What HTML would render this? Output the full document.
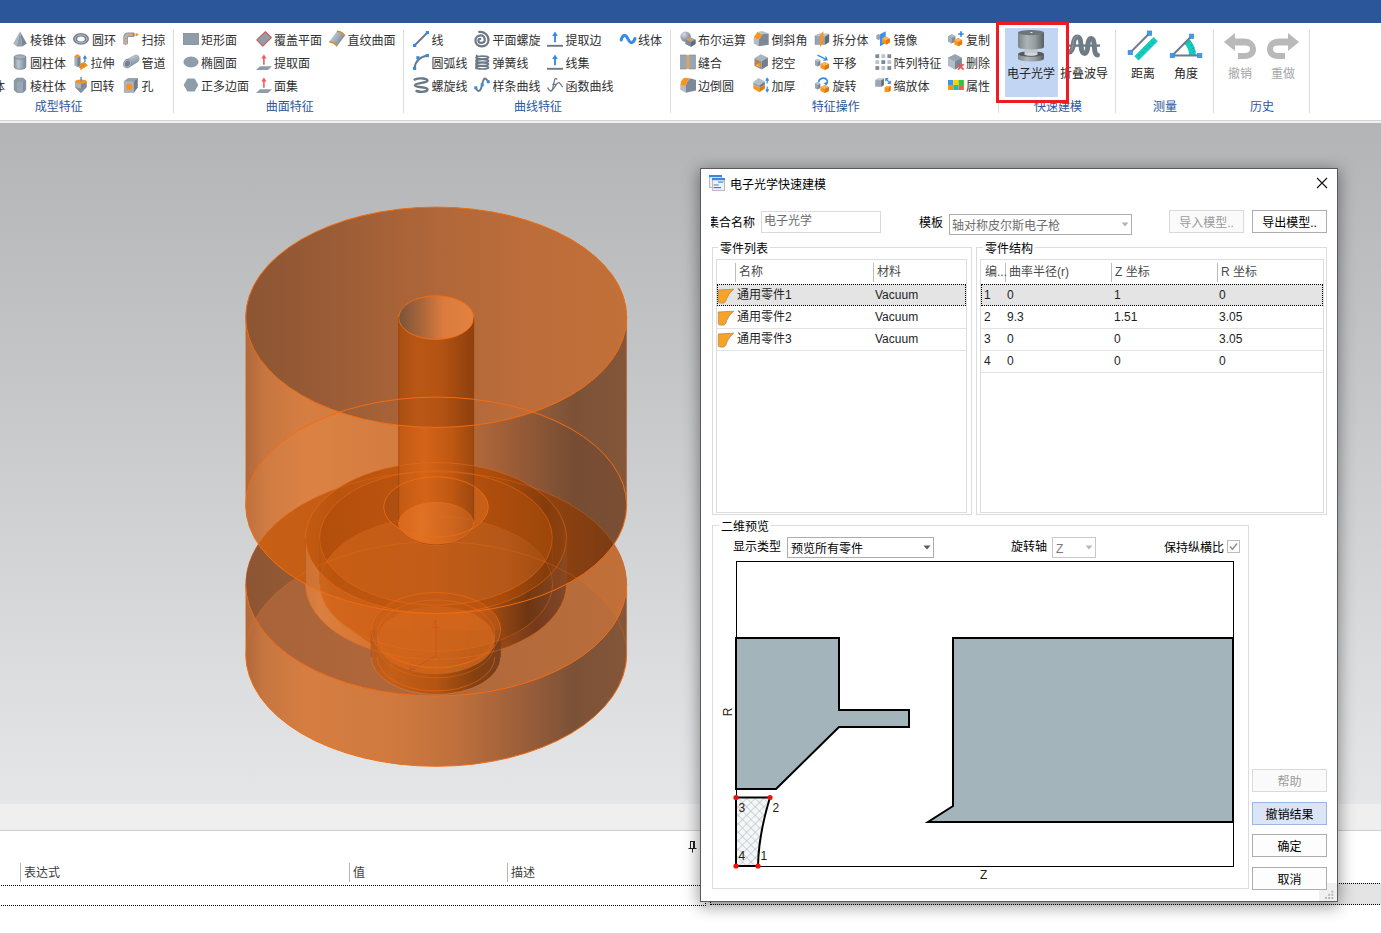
<!DOCTYPE html>
<html lang="zh-CN">
<head>
<meta charset="utf-8">
<title>电子光学快速建模</title>
<style>
*{box-sizing:border-box;margin:0;padding:0}
html,body{width:1381px;height:933px;overflow:hidden;background:#fff}
body{position:relative;font-family:"Liberation Sans","Noto Sans CJK SC",sans-serif;font-size:12px;color:#000;line-height:16px}
.abs{position:absolute}
#titlebar{left:0;top:0;width:1381px;height:23px;background:#2b579a}
#ribbon{left:0;top:23px;width:1381px;height:97px;background:#fff}
#rline1{left:0;top:120px;width:1381px;height:1px;background:#d5d5d5}
#rline2{left:0;top:121px;width:1381px;height:2px;background:#f1f1f1}
#viewport{left:0;top:123px;width:1381px;height:681px;background:linear-gradient(#b3b4b6 0%,#c6c7c9 40%,#d9dadb 75%,#e5e6e7 100%)}
#band{left:0;top:804px;width:1381px;height:26px;background:#efefef}
#bandline{left:0;top:830px;width:1381px;height:1px;background:#cfcfcf}
#bottom{left:0;top:831px;width:1381px;height:102px;background:#fff}
.ri{position:absolute;height:16px;line-height:16px;white-space:nowrap;color:#303030}
.ri svg{position:absolute;left:0;top:0;width:16px;height:16px;overflow:visible}
.ri span{position:absolute;top:0}
.glabel{position:absolute;top:99px;height:16px;line-height:16px;color:#2b579a;white-space:nowrap;transform:translateX(-50%)}
.vsep{position:absolute;top:30px;width:1px;height:83px;background:#dcdcdc}
.big{position:absolute;text-align:center;white-space:nowrap;color:#262626;transform:translateX(-50%);top:66px;height:16px;line-height:16px}
/* dialog */
#dlg{left:700px;top:168px;width:638px;height:734px;background:#fff;border:1px solid #5a5a5a;box-shadow:0 3px 15px 1px rgba(0,0,0,.42)}
.t{position:absolute;white-space:nowrap;height:16px;line-height:16px;margin-top:1px}
.grp{position:absolute;border:1px solid #dcdcdc}
.list{position:absolute;border:1px solid #dcdcdc;background:#fff}
.btn{position:absolute;width:75px;height:23px;border:1px solid #adadad;background:#fdfdfd;text-align:center;line-height:22px;padding-top:1px;white-space:nowrap}
.t.r{margin-top:0;color:#1e1e1e}
.btn.dis{border-color:#d9d9d9;background:#fafafa;color:#9a9a9a}
.btn.hot{border-color:#9cb6e2;background:#dbe5f6}
.combo{position:absolute;height:21px;border:1px solid #adadad;background:#fff}
.hsep{position:absolute;width:1px;background:#bdbdbd}
.rowline{position:absolute;height:1px;background:#e3e3e3}
.sel{position:absolute;background:#e4e4e4;outline:1px dotted #000;outline-offset:-1px}
</style>
</head>
<body>
<div id="titlebar" class="abs"></div>
<div id="ribbon" class="abs">
<div class="abs" style="left:0;top:-23px;width:0;height:0">
<svg width="0" height="0" style="position:absolute"><defs><linearGradient id="gcyl" x1="0" x2="1"><stop offset="0" stop-color="#7c8998"/><stop offset=".35" stop-color="#cdd5dd"/><stop offset="1" stop-color="#7c8998"/></linearGradient><linearGradient id="gcyl2" x1="0" x2="1"><stop offset="0" stop-color="#8492a2"/><stop offset=".35" stop-color="#bcc6cf"/><stop offset="1" stop-color="#7a8898"/></linearGradient><linearGradient id="gpipe" x1="0" y1="0" x2=".5" y2="1"><stop offset="0" stop-color="#d0d7de"/><stop offset=".5" stop-color="#a9b4c0"/><stop offset="1" stop-color="#7a8898"/></linearGradient><linearGradient id="gruled" x1="0" y1="0" x2="1" y2=".6"><stop offset="0" stop-color="#d3dae0"/><stop offset=".55" stop-color="#a5b0bc"/><stop offset="1" stop-color="#6f7c8b"/></linearGradient><radialGradient id="gsph" cx=".35" cy=".3" r=".75"><stop offset="0" stop-color="#d5dce3"/><stop offset="1" stop-color="#6f7b89"/></radialGradient><linearGradient id="gbig" x1="0" x2="1"><stop offset="0" stop-color="#7c8589"/><stop offset=".35" stop-color="#adb5b8"/><stop offset=".65" stop-color="#959da1"/><stop offset="1" stop-color="#585f63"/></linearGradient></defs></svg>
<div class="ri" style="left:-7px;top:77px"><span style="left:0;top:2px">体</span></div>
<div class="ri" style="left:13px;top:31px"><svg viewBox="0 0 16 16"><g transform="translate(-1 0)"><path d="M8 0.6 L1.2 12.6 L4.6 15.4 Z" fill="#aab5c0"/><path d="M8 0.6 L4.6 15.4 L10.4 15.4 Z" fill="#8f9cab"/><path d="M8 0.6 L10.4 15.4 L14.8 12.6 Z" fill="#7a8898"/></g></svg><span style="left:17px;top:2px">棱锥体</span></div>
<div class="ri" style="left:13px;top:54px"><svg viewBox="0 0 16 16"><g transform="translate(-1 0)"><path d="M2.2 3 V13 A5.8 2.3 0 0 0 13.8 13 V3 Z" fill="url(#gcyl2)" stroke="#6f7d8c" stroke-width=".7"/><ellipse cx="8" cy="3" rx="5.8" ry="2.2" fill="#a3afbc" stroke="#6f7d8c" stroke-width=".7"/></g></svg><span style="left:17px;top:2px">圆柱体</span></div>
<div class="ri" style="left:13px;top:77px"><svg viewBox="0 0 16 16"><g transform="translate(-1 0)"><path d="M2.2 3.5 L5 1 H11 L13.8 3.5 V13 L11 15.5 H5 L2.2 13 Z" fill="#7f8d9d" stroke="#6f7d8c" stroke-width=".5"/><path d="M5 4.2 V15.5 H11 V4.2 Z" fill="#9aa7b5"/><path d="M2.2 3.5 L5 4.2 V15.5 L2.2 13 Z" fill="#8a98a8"/><path d="M2.2 3.5 L5 1 H11 L13.8 3.5 L11 4.4 H5 Z" fill="#8c99a8"/></g></svg><span style="left:17px;top:2px">棱柱体</span></div>
<div class="ri" style="left:73px;top:31px"><svg viewBox="0 0 16 16"><ellipse cx="8" cy="7.9" rx="8" ry="5.9" fill="#75818e"/><ellipse cx="8" cy="7.9" rx="5.9" ry="4.1" fill="none" stroke="#c3cbd3" stroke-width=".9"/><ellipse cx="8" cy="7.9" rx="3.8" ry="2.5" fill="#fff"/></svg><span style="left:19px;top:2px">圆环</span></div>
<div class="ri" style="left:73px;top:54px"><svg viewBox="0 0 16 16"><g transform="translate(1 0)"><path d="M3.8 11 L10.1 7.7 L13.9 11.4 L6.8 15.9 Z" fill="#f7941d"/><path d="M7 9.4 L10.4 13.6 M5.4 13.5 L12 9.6" stroke="#d9780c" stroke-width=".6"/><path d="M0.4 2.2 L3.4 0.2 L6.4 2.2 V11.4 L3.4 12.9 L0.4 11.4 Z" fill="#a3afbc"/><path d="M3.4 4 V12.9 L6.4 11.4 V2.2 Z" fill="#778595"/><path d="M0.4 2.2 L3.4 0.2 L6.4 2.2 L3.4 4 Z" fill="#f7941d"/><path d="M10.9 3 V8 M9.4 4.6 L10.9 2.2 L12.4 4.6" stroke="#368be4" stroke-width="1.3" fill="none"/></g></svg><span style="left:17.6px;top:2px">拉伸</span></div>
<div class="ri" style="left:73px;top:77px"><svg viewBox="0 0 16 16"><path d="M2.1 4.6 V10.1 L7.9 15.9 L13.8 10.1 V4.6 Z" fill="#7c8a99"/><path d="M2.1 4.6 V10.1 L7.9 15.9 V4.6 Z" fill="#a9b4c0"/><path d="M2.1 10.1 L7.9 15.9 L13.8 10.1 Q8 12.4 2.1 10.1Z" fill="#8492a1"/><ellipse cx="7.95" cy="4.5" rx="5.85" ry="2" fill="#f7941d"/><path d="M8.1 0 V4.6" stroke="#5f8fd0" stroke-width="1.5"/></svg><span style="left:17.6px;top:2px">回转</span></div>
<div class="ri" style="left:123px;top:31px"><svg viewBox="0 0 16 16"><path d="M2.6 13.2 V6.6 Q2.6 3.8 5.4 3.8 H10.6" fill="none" stroke="#8795a4" stroke-width="4.6"/><path d="M2.6 13.2 V6.6 Q2.6 3.8 5.4 3.8 H10.6" fill="none" stroke="#b4bec8" stroke-width="2.6"/><ellipse cx="10.6" cy="3.8" rx="1.2" ry="2.3" fill="#8795a4"/><path d="M2.6 14.2 V6.8 Q2.6 3.8 5.6 3.8 H12.6" fill="none" stroke="#f7941d" stroke-width="1.2" stroke-dasharray="1.8 1.1"/><path d="M12.8 1.8 L16 3.7 L12.8 5.6 Z" fill="#f7941d"/></svg><span style="left:18.5px;top:2px">扫掠</span></div>
<div class="ri" style="left:123px;top:54px"><svg viewBox="0 0 16 16"><path d="M2.6 5.6 L10.8 1.2 A3.4 4.2 25 0 1 14.2 8.6 L6.2 13.6 Z" fill="url(#gpipe)"/><ellipse cx="4.4" cy="9.6" rx="3.7" ry="4.5" transform="rotate(20 4.4 9.6)" fill="#b4bec8" stroke="#8492a1" stroke-width=".7"/><ellipse cx="4.4" cy="9.6" rx="2.5" ry="3.2" transform="rotate(20 4.4 9.6)" fill="#76838f"/></svg><span style="left:18.5px;top:2px">管道</span></div>
<div class="ri" style="left:123px;top:77px"><svg viewBox="0 0 16 16"><path d="M1.3 4.1 L5 1.1 H14.8 L11 4.1 Z" fill="#97a3b0"/><path d="M1.3 4.1 H11 V15.4 H1.3 Z" fill="#aab5c1" stroke="#7c8a99" stroke-width=".5"/><path d="M11 4.1 L14.8 1.1 V10.5 L11 15.4 Z" fill="#717e8d"/><rect x="3.2" y="6.8" width="6" height="6" rx="1.8" fill="#f7941d"/></svg><span style="left:18.5px;top:2px">孔</span></div>
<div class="ri" style="left:183px;top:31px"><svg viewBox="0 0 16 16"><rect x="0.5" y="2.5" width="15" height="11" fill="#8f9dab" stroke="#7c8998" stroke-width=".8"/></svg><span style="left:18px;top:2px">矩形面</span></div>
<div class="ri" style="left:183px;top:54px"><svg viewBox="0 0 16 16"><ellipse cx="8" cy="8" rx="7.6" ry="5.4" fill="#8f9dab"/></svg><span style="left:18px;top:2px">椭圆面</span></div>
<div class="ri" style="left:183px;top:77px"><svg viewBox="0 0 16 16"><path d="M0.6 8 L4.4 1.6 H11.6 L15.4 8 L11.6 14.6 H4.4 Z" fill="#8f9dab"/></svg><span style="left:18px;top:2px">正多边面</span></div>
<div class="ri" style="left:256px;top:31px"><svg viewBox="0 0 16 16"><path d="M0.8 8.9 L9.4 0.8 L15.4 6.6 L6.8 15.2 Z" fill="#8f9dab" stroke="#cf5c5c" stroke-width="1.2" stroke-linejoin="round"/></svg><span style="left:18px;top:2px">覆盖平面</span></div>
<div class="ri" style="left:256px;top:54px"><svg viewBox="0 0 16 16"><path d="M4 12.2 H16 L12 15.9 H0 Z" fill="#8f9dab"/><path d="M7.9 3.4 V10.8" stroke="#dc5656" stroke-width="1.5"/><path d="M5.3 4.4 L7.9 0.4 L10.5 4.4 Z" fill="#f05a5a"/></svg><span style="left:18px;top:2px">提取面</span></div>
<div class="ri" style="left:256px;top:77px"><svg viewBox="0 0 16 16"><path d="M4 12.2 H16 L12 15.9 H0 Z" fill="#8f9dab"/><path d="M7.9 3.4 V10.8" stroke="#dc5656" stroke-width="1.5"/><path d="M5.3 4.4 L7.9 0.4 L10.5 4.4 Z" fill="#f05a5a"/></svg><span style="left:18px;top:2px">面集</span></div>
<div class="ri" style="left:329px;top:31px"><svg viewBox="0 0 16 16"><path d="M0.2 10.8 L8 0.3 Q13.5 0.8 15.9 4.8 L8 15.3 Q5.5 11.4 0.2 10.8 Z" fill="url(#gruled)"/><path d="M8 0.3 Q13.5 0.8 15.9 4.8" fill="none" stroke="#d18a2c" stroke-width="1.4"/><path d="M0.2 10.8 Q5.5 11.4 8 15.3" fill="none" stroke="#d18a2c" stroke-width="1.4"/></svg><span style="left:18.5px;top:2px">直纹曲面</span></div>
<div class="ri" style="left:413px;top:31px"><svg viewBox="0 0 16 16"><path d="M1.5 14.5 L14.5 1.5" stroke="#6b7886" stroke-width="1.9"/><rect x="0" y="12.8" width="3.2" height="3.2" fill="#368be4"/><rect x="12.8" y="0" width="3.2" height="3.2" fill="#368be4"/></svg><span style="left:18.5px;top:2px">线</span></div>
<div class="ri" style="left:413px;top:54px"><svg viewBox="0 0 16 16"><path d="M1.5 14.5 Q2.5 3.5 14.5 1.5" stroke="#6b7886" stroke-width="1.9" fill="none"/><rect x="0" y="12.8" width="3.2" height="3.2" fill="#368be4"/><rect x="3.3" y="2.2" width="3.2" height="3.2" fill="#368be4"/><rect x="12.8" y="0" width="3.2" height="3.2" fill="#368be4"/></svg><span style="left:18.5px;top:2px">圆弧线</span></div>
<div class="ri" style="left:413px;top:77px"><svg viewBox="0 0 16 16"><path d="M1.6 2.6 C7 0.4 14.5 1.6 14.5 3.8 C14.5 6.2 2 5.6 2 8.2 C2 10.6 14.5 9.8 14.5 12.2 C14.5 14.8 8 15.6 3.5 14" stroke="#6b7886" stroke-width="2.4" fill="none" stroke-linecap="round"/></svg><span style="left:18.5px;top:2px">螺旋线</span></div>
<div class="ri" style="left:474px;top:31px"><svg viewBox="0 0 16 16"><path d="M5.2 0.9 C10.5 0.4 14.6 4.2 14.5 9.3 C14.4 13 11.6 15.3 7.8 15.3 C4 15.3 1.4 12.8 1.4 9.3 C1.4 6.4 3.8 4.4 7 4.4 C9.5 4.4 10.9 6.6 10.8 9.3 C10.7 11 9 11.9 7 11.9 C5.4 11.9 4.4 10.8 4.4 9.3 C4.4 8.2 5.2 7.6 6.3 7.8" stroke="#6b7886" stroke-width="2.2" fill="none" stroke-linecap="round"/></svg><span style="left:18.5px;top:2px">平面螺旋</span></div>
<div class="ri" style="left:474px;top:54px"><svg viewBox="0 0 16 16"><g fill="none" stroke="#6b7886" stroke-width="1.7"><ellipse cx="8.3" cy="3.6" rx="6.2" ry="1.5"/><ellipse cx="8.3" cy="6.9" rx="6.2" ry="1.5"/><ellipse cx="8.3" cy="10.2" rx="6.2" ry="1.5"/><ellipse cx="8.3" cy="13.5" rx="6.2" ry="1.5"/></g><path d="M2.8 0.8 L2.2 15.2" stroke="#6b7886" stroke-width="1.8"/></svg><span style="left:18.5px;top:2px">弹簧线</span></div>
<div class="ri" style="left:474px;top:77px"><svg viewBox="0 0 16 16"><path d="M1.8 10.8 C3.5 15.5 6.4 15 7.8 9 C9 3.5 10 0.8 11.5 1.6 C12.8 2.2 13.5 3.6 14.4 4.8" stroke="#6b7886" stroke-width="1.9" fill="none"/><rect x="0.3" y="9.3" width="3" height="3" fill="#368be4"/><rect x="6.7" y="6.3" width="3" height="3" fill="#368be4"/><rect x="12.8" y="3.3" width="3" height="3" fill="#368be4"/></svg><span style="left:18.5px;top:2px">样条曲线</span></div>
<div class="ri" style="left:547px;top:31px"><svg viewBox="0 0 16 16"><path d="M0 14.8 H16" stroke="#6b7886" stroke-width="1.9"/><path d="M8 3.4 V11.2" stroke="#368be4" stroke-width="1.9"/><path d="M5.2 5 L8 0.4 L10.8 5 Z" fill="#368be4"/></svg><span style="left:18.5px;top:2px">提取边</span></div>
<div class="ri" style="left:547px;top:54px"><svg viewBox="0 0 16 16"><path d="M0 14.8 H16" stroke="#6b7886" stroke-width="1.9"/><path d="M8 3.4 V11.2" stroke="#368be4" stroke-width="1.9"/><path d="M5.2 5 L8 0.4 L10.8 5 Z" fill="#368be4"/></svg><span style="left:18.5px;top:2px">线集</span></div>
<div class="ri" style="left:547px;top:77px"><svg viewBox="0 0 16 16"><path d="M10.2 2.4 C9.2 0.9 7.9 1.4 7.4 3.6 L5.6 12 C5.2 14 4 14.6 2.9 13.6 M5.4 7.3 H9.6" stroke="#6b7886" stroke-width="1.2" fill="none"/><path d="M0.6 10.4 C2 14 4.5 15 7 11 C9 7.5 10.5 5 12 5.6 C13.5 6.2 14.6 8.4 15.6 10.2" stroke="#6b7886" stroke-width="1.3" fill="none"/></svg><span style="left:18.5px;top:2px">函数曲线</span></div>
<div class="ri" style="left:620px;top:31px"><svg viewBox="0 0 16 16"><path d="M1.2 9 C2.5 4 5.5 2.5 8 8 C10.5 13.5 13.5 12 15 7.5" stroke="#368be4" stroke-width="3" fill="none" stroke-linecap="round"/></svg><span style="left:18px;top:2px">线体</span></div>
<div class="ri" style="left:680px;top:31px"><svg viewBox="0 0 16 16"><circle cx="5.6" cy="5.6" r="5.2" fill="url(#gsph)"/><path d="M5.5 8.5 L10 6 L15.5 8.5 V13 L11 15.8 L5.5 13 Z" fill="#98a5b3"/><path d="M5.5 8.5 L11 11 V15.8 L5.5 13 Z" fill="#7c8998"/><path d="M11 11 L15.5 8.5 V13 L11 15.8 Z" fill="#5f6b79"/><path d="M6 8.6 L10 6.2 L10.8 10.6 Z" fill="#f7941d"/></svg><span style="left:18px;top:2px">布尔运算</span></div>
<div class="ri" style="left:680px;top:54px"><svg viewBox="0 0 16 16"><rect x="0.5" y="1" width="6" height="14" fill="#98a5b3" stroke="#7c8998" stroke-width=".6"/><rect x="9.5" y="1" width="6" height="14" fill="#98a5b3" stroke="#7c8998" stroke-width=".6"/><rect x="6.5" y="1" width="3" height="14" fill="#d9a468"/></svg><span style="left:18px;top:2px">缝合</span></div>
<div class="ri" style="left:680px;top:77px"><svg viewBox="0 0 16 16"><path d="M0.3 8.3 L5.8 9 V15.7 L0.3 12.8 Z" fill="#b2bcc6"/><path d="M5.8 9 Q7 2.5 11 1.5 L16 3 V13.5 L5.8 15.7 Z" fill="#7c8998"/><path d="M0.3 8.4 Q0.8 1.8 5 0.8 L11 1.5 Q7 2.5 5.8 9.1 Z" fill="#f8951d"/></svg><span style="left:18px;top:2px">边倒圆</span></div>
<div class="ri" style="left:753px;top:31px"><svg viewBox="0 0 16 16"><path d="M4.4 1 L9.3 0 L15.7 2.5 L9.3 3.3 Z" fill="#b9c3cd"/><path d="M0.7 6.3 L5.5 8.9 V15.3 L0.7 12.6 Z" fill="#b2bcc6"/><path d="M5.5 8.9 L9.3 3.3 L15.7 2.5 V13.8 L5.5 15.3 Z" fill="#7c8998"/><path d="M0.7 6.3 L4.4 1 L9.3 3.3 L5.5 8.9 Z" fill="#f8951d"/></svg><span style="left:18.5px;top:2px">倒斜角</span></div>
<div class="ri" style="left:753px;top:54px"><svg viewBox="0 0 16 16"><path d="M1.4 4.3 L7.8 0.2 L14.9 3.5 L8.5 7.3 Z" fill="#a9b4c0"/><path d="M1.4 4.3 L8.5 7.3 V15.5 L1.4 11.8 Z" fill="#8995a3"/><path d="M8.5 7.3 L14.9 3.5 V11.8 L8.5 15.5 Z" fill="#717e8d"/><path d="M2.6 6.6 L7.3 8.8 V13.5 L2.6 11.3 Z" fill="#e8730c"/><path d="M2.6 11.3 L5 9.6 L7.3 13.5 Z" fill="#fbb040"/><path d="M5 9.6 L7.3 8.8 V13.5 Z" fill="#f7941d"/></svg><span style="left:18.5px;top:2px">挖空</span></div>
<div class="ri" style="left:753px;top:77px"><svg viewBox="0 0 16 16"><path d="M0.3 4.9 L5.5 1.1 L11.9 4.5 L6.3 8.2 Z" fill="#b4bec9"/><path d="M0.3 4.9 L6.3 8.2 V10.6 L0.3 8 Z" fill="#97a3b0"/><path d="M6.3 8.2 L11.9 4.5 V8 L6.3 10.6 Z" fill="#74808f"/><path d="M0.3 8 L6.3 10.6 V15.2 L0.3 11.6 Z" fill="#f8951d"/><path d="M6.3 10.6 L11.9 8 V11.6 L6.3 15.2 Z" fill="#e07a0c"/><path d="M14.2 2.2 V6.4 M12.8 3.6 L14.2 1.4 L15.6 3.6 M14.2 9.6 V13.8 M12.8 12.4 L14.2 14.6 L15.6 12.4" stroke="#368be4" stroke-width="1.2" fill="none"/></svg><span style="left:18.5px;top:2px">加厚</span></div>
<div class="ri" style="left:814px;top:31px"><svg viewBox="0 0 16 16"><path d="M1 5 L5 3 H15 V11 L11 13.5 H1 Z" fill="#98a5b3" stroke="#7c8998" stroke-width=".5"/><path d="M11 5.5 L15 3 V11 L11 13.5 Z" fill="#5f6b79"/><path d="M1 5 L5 3 H15 L11 5.5 Z" fill="#bcc5ce"/><path d="M6 3.5 L9.5 0.3 V12.5 L6 15.8 Z" fill="#f7941d" opacity=".92"/></svg><span style="left:18.5px;top:2px">拆分体</span></div>
<div class="ri" style="left:814px;top:54px"><svg viewBox="0 0 16 16"><path d="M1 6.6 L3.7 5 L6.4 6.6 V11 L3.7 12.6 L1 11 Z" fill="#7c8998"/><path d="M1 6.6 L3.7 5 L6.4 6.6 L3.7 8.2 Z" fill="#b9c3cd"/><path d="M1 6.6 L3.7 8.2 V12.6 L1 11 Z" fill="#98a5b3"/><path d="M6.5 10 L10.8 8 L15 10 V14 L10.8 16 L6.5 14 Z" fill="#f7941d"/><path d="M6.5 10 L10.8 8 L15 10 L10.8 12 Z" fill="#fbb45c"/><path d="M10.8 12 L15 10 V14 L10.8 16Z" fill="#d9780c"/><path d="M3.5 1.2 L12.5 5.6 M9.4 6.4 L13 5.8 L11.6 2.6" stroke="#368be4" stroke-width="1.3" fill="none"/></svg><span style="left:18.5px;top:2px">平移</span></div>
<div class="ri" style="left:814px;top:77px"><svg viewBox="0 0 16 16"><path d="M1 6.6 L3.7 5 L6.4 6.6 V11 L3.7 12.6 L1 11 Z" fill="#7c8998"/><path d="M1 6.6 L3.7 5 L6.4 6.6 L3.7 8.2 Z" fill="#b9c3cd"/><path d="M1 6.6 L3.7 8.2 V12.6 L1 11 Z" fill="#98a5b3"/><path d="M6.5 10 L10.8 8 L15 10 V14 L10.8 16 L6.5 14 Z" fill="#f7941d"/><path d="M6.5 10 L10.8 8 L15 10 L10.8 12 Z" fill="#fbb45c"/><path d="M10.8 12 L15 10 V14 L10.8 16Z" fill="#d9780c"/><path d="M5 5 A4.2 3.4 0 1 1 11.5 7.4" stroke="#368be4" stroke-width="1.7" fill="none"/><path d="M9.4 6 L13 8.6 L13.4 5 Z" fill="#368be4"/></svg><span style="left:18.5px;top:2px">旋转</span></div>
<div class="ri" style="left:876px;top:31px"><svg viewBox="0 0 16 16"><path d="M0.3 4.2 L2.6 3 L4.6 4.2 V8 L2.6 9 L0.3 8 Z" fill="#98a5b3"/><path d="M4 3.3 L9.7 0.3 V11.9 L4 15.3 Z" fill="#3d8fe8"/><path d="M6 7.6 L9.9 5.6 L13.8 7.6 V11.4 L9.9 13.4 L6 11.4 Z" fill="#f7941d"/><path d="M6 7.6 L9.9 5.6 L13.8 7.6 L9.9 9.5 Z" fill="#fbb45c"/><path d="M9.9 9.5 L13.8 7.6 V11.4 L9.9 13.4Z" fill="#e07a0c"/></svg><span style="left:17.5px;top:2px">镜像</span></div>
<div class="ri" style="left:876px;top:54px"><svg viewBox="0 0 16 16"><rect x="-0.6" y="0.3" width="3.8" height="3.8" fill="#7c8998"/><rect x="5.4" y="0.3" width="3.8" height="3.8" fill="#b9c3cd"/><rect x="11.4" y="0.3" width="3.8" height="3.8" fill="#7c8998"/><rect x="-0.6" y="6.2" width="3.8" height="3.8" fill="#b9c3cd"/><rect x="5.4" y="6.2" width="3.8" height="3.8" fill="#7c8998"/><rect x="11.4" y="6.2" width="3.8" height="3.8" fill="#b9c3cd"/><rect x="-0.6" y="12.1" width="3.8" height="3.8" fill="#7c8998"/><rect x="5.4" y="12.1" width="3.8" height="3.8" fill="#b9c3cd"/><rect x="11.4" y="12.1" width="3.8" height="3.8" fill="#7c8998"/></svg><span style="left:17.5px;top:2px">阵列特征</span></div>
<div class="ri" style="left:876px;top:77px"><svg viewBox="0 0 16 16"><path d="M-0.8 3.2 L1.6 1.5 H7.8 V8 L5.4 9.8 H-0.8 Z" fill="#98a5b3"/><path d="M5.4 3.2 L7.8 1.5 V8 L5.4 9.8Z" fill="#5f6b79"/><path d="M-0.8 3.2 L1.6 1.5 H7.8 L5.4 3.2Z" fill="#c3ccd5"/><path d="M8.6 10.4 L10.4 9 H14.6 V13.6 L12.8 15 H8.6 Z" fill="#f7941d"/><path d="M12.8 10.4 L14.6 9 V13.6 L12.8 15Z" fill="#d9780c"/><path d="M8.6 10.4 L10.4 9 H14.6 L12.8 10.4Z" fill="#fbb45c"/><path d="M9.8 1.6 L14.2 6.4 M9.8 4.2 V1.6 H12.4 M14.2 3.8 V6.4 H11.6" stroke="#368be4" stroke-width="1.2" fill="none"/></svg><span style="left:17.5px;top:2px">缩放体</span></div>
<div class="ri" style="left:948px;top:31px"><svg viewBox="0 0 16 16"><path d="M0.2 5.2 L3.8 3.3 L7.4 5.2 V10.6 L3.8 12.6 L0.2 10.6 Z" fill="#7c8998"/><path d="M0.2 5.2 L3.8 3.3 L7.4 5.2 L3.8 7.2 Z" fill="#aeb9c4"/><path d="M0.2 5.2 L3.8 7.2 V12.6 L0.2 10.6 Z" fill="#a3aebb"/><path d="M6.3 9 L10.2 7 L14.1 9 V13.2 L10.2 15.3 L6.3 13.2 Z" fill="#f7941d"/><path d="M6.3 9 L10.2 7 L14.1 9 L10.2 11 Z" fill="#fbb45c"/><path d="M10.2 11 L14.1 9 V13.2 L10.2 15.3Z" fill="#e8780a"/><path d="M13 0.2 V5.8 M10.2 3 H15.8" stroke="#368be4" stroke-width="1.7"/></svg><span style="left:18px;top:2px">复制</span></div>
<div class="ri" style="left:948px;top:54px"><svg viewBox="0 0 16 16"><path d="M7 0.3 L13.8 3.8 V11.5 L7 15.5 L0 11.5 V3.8 Z" fill="#a3aebb"/><path d="M7 0.3 L13.8 3.8 L7 7.4 L0 3.8 Z" fill="#97a3b0"/><path d="M7 7.4 L13.8 3.8 V11.5 L7 15.5 Z" fill="#7a8796"/><path d="M0 3.8 L7 7.4 V15.5 L0 11.5 Z" fill="#b2bcc7"/><path d="M10 10.2 L15.6 15.6 M15.6 10.2 L10 15.6" stroke="#f05050" stroke-width="1.7"/></svg><span style="left:18px;top:2px">删除</span></div>
<div class="ri" style="left:948px;top:77px"><svg viewBox="0 0 16 16"><rect x="0" y="3" width="5.3" height="5" fill="#3d95f0"/><rect x="5.3" y="3" width="5.3" height="5" fill="#fdd000"/><rect x="10.6" y="3" width="5.3" height="5" fill="#2ec840"/><rect x="0" y="8" width="5.3" height="5" fill="#ff9500"/><rect x="5.3" y="8" width="5.3" height="5" fill="#0bc5b5"/><rect x="10.6" y="8" width="5.3" height="5" fill="#ff5a5a"/></svg><span style="left:18px;top:2px">属性</span></div>
<div class="vsep" style="left:173px"></div>
<div class="vsep" style="left:403px"></div>
<div class="vsep" style="left:670px"></div>
<div class="vsep" style="left:998px"></div>
<div class="vsep" style="left:1115px"></div>
<div class="vsep" style="left:1213px"></div>
<div class="vsep" style="left:1309px"></div>
<div class="glabel" style="left:58.8px">成型特征</div>
<div class="glabel" style="left:289.8px">曲面特征</div>
<div class="glabel" style="left:538px">曲线特征</div>
<div class="glabel" style="left:835.8px">特征操作</div>
<div class="glabel" style="left:1058px">快速建模</div>
<div class="glabel" style="left:1165px">测量</div>
<div class="glabel" style="left:1262px">历史</div>
<div class="abs" style="left:1005px;top:28px;width:53px;height:69px;background:#c2d5f2"></div>
<svg class="abs" style="left:1015px;top:29px" width="32" height="34" viewBox="0 0 32 34">
<path d="M3 25 V29.8 A13 2.8 0 0 0 29 29.8 V25 Z" fill="url(#gbig)"/><ellipse cx="16" cy="25" rx="13" ry="2.8" fill="#555c60"/>
<path d="M9.5 20 V25.2 A6.5 1.6 0 0 0 22.5 25.2 V20 Z" fill="#c3c8cb"/><ellipse cx="16" cy="25.2" rx="6.5" ry="1.6" fill="#d3d7d9"/>
<path d="M3 3.6 V18 A13 2.6 0 0 0 29 18 V3.6 Z" fill="url(#gbig)"/><ellipse cx="16" cy="3.6" rx="13" ry="2.6" fill="#6d7579"/><ellipse cx="16.4" cy="3.5" rx="1.2" ry=".6" fill="#f2f2f2"/>
</svg>
<svg class="abs" style="left:1066px;top:32px" width="36" height="28" viewBox="1066 32 36 28">
<path d="M1069 45.6 H1100" stroke="#6e7b88" stroke-width="2.4" fill="none"/>
<path d="M1069.5 52 C1072.5 51.5 1073 48 1073.4 44 C1073.9 39 1075.4 37 1077.5 37 C1079.9 37 1080.8 40 1081 45 C1081.2 50 1082.2 53.6 1084.6 53.6 C1087 53.6 1087.6 50 1087.8 46 C1088 41 1089 38.4 1091.2 38.4 C1093.5 38.4 1094.2 42 1094.4 47 C1094.6 52 1095.4 55 1097.4 55" fill="none" stroke="#6e7b88" stroke-width="5" stroke-linecap="round"/>
<path d="M1070 51 C1072.5 50.5 1072.6 47 1073 43.5 C1073.5 39 1075 36.4 1077.3 36.4" fill="none" stroke="#8794a0" stroke-width="1.2" stroke-linecap="round"/>
</svg>
<svg class="abs" style="left:1127px;top:30px" width="32" height="32" viewBox="1127 30 32 32">
<path d="M1130.2 52.6 L1149.5 33.2" stroke="#6e7b8a" stroke-width="2"/>
<rect x="1128.1" y="50.4" width="4.3" height="4.3" fill="#3d9bf0" stroke="#2f7fd0" stroke-width=".6"/><rect x="1147.4" y="31" width="4.3" height="4.3" fill="#3d9bf0" stroke="#2f7fd0" stroke-width=".6"/>
<path d="M1153.6 37.1 L1157.8 41.3 L1138.6 60.5 L1134.3 56.3 Z" fill="#14cbbd"/><path d="M1138.3 54.6 l1.5 1.5 M1141.6 51.3 l2.2 2.2 M1144.9 48 l1.5 1.5 M1148.2 44.7 l2.2 2.2 M1151.5 41.4 l1.5 1.5" stroke="#0e9e92" stroke-width=".8"/>
</svg>
<svg class="abs" style="left:1169px;top:32px" width="34" height="28" viewBox="1169 32 34 28">
<path d="M1189.1 55.5 A16.8 16.8 0 0 0 1184.2 43.6 L1189 38.8 A23.6 23.6 0 0 1 1195.9 55.5 Z" fill="#14cbbd"/>
<path d="M1190.6 45.5 l2 -1 M1192.2 48.5 l2.2 -.8 M1193.3 51.6 l2.3 -.4 M1188.6 42.6 l1.8 -1.4" stroke="#0e9e92" stroke-width=".8"/>
<path d="M1172.3 55.5 L1191.5 36.2 M1172.3 55.5 H1199.7" stroke="#6e7b8a" stroke-width="2" fill="none"/>
<rect x="1170.2" y="53.4" width="4.3" height="4.3" fill="#3d9bf0" stroke="#2f7fd0" stroke-width=".6"/><rect x="1189.4" y="34.1" width="4.3" height="4.3" fill="#3d9bf0" stroke="#2f7fd0" stroke-width=".6"/><rect x="1197.6" y="53.4" width="4.3" height="4.3" fill="#3d9bf0" stroke="#2f7fd0" stroke-width=".6"/>
</svg>
<svg class="abs" style="left:1224px;top:33px" width="32" height="26" viewBox="0 0 32 26"><path d="M0 9 L11 0 V5.5 H20 C27 5.5 32 10 32 16.5 C32 22.5 27 26 21 26 H14 V20 H21 C24 20 26 18.6 26 16 C26 13.4 24 12.5 21 12.5 H11 V18 Z" fill="#b9b9b9"/></svg>
<svg class="abs" style="left:1267px;top:33px" width="32" height="26" viewBox="0 0 32 26"><path d="M0 9 L11 0 V5.5 H20 C27 5.5 32 10 32 16.5 C32 22.5 27 26 21 26 H14 V20 H21 C24 20 26 18.6 26 16 C26 13.4 24 12.5 21 12.5 H11 V18 Z" fill="#b9b9b9" transform="translate(32 0) scale(-1 1)"/></svg>
<div class="big" style="left:1031px;color:#262626">电子光学</div>
<div class="big" style="left:1084px;color:#262626">折叠波导</div>
<div class="big" style="left:1143px;color:#262626">距离</div>
<div class="big" style="left:1186px;color:#262626">角度</div>
<div class="big" style="left:1240px;color:#a6a6a6">撤销</div>
<div class="big" style="left:1283px;color:#a6a6a6">重做</div>
<div class="abs" style="left:996px;top:22px;width:73px;height:81px;border:3px solid #ed1c24"></div>
</div>
</div>
<div id="rline1" class="abs"></div><div id="rline2" class="abs"></div>
<div id="viewport" class="abs">
<svg class="abs" style="left:0;top:0" width="1381" height="681" viewBox="0 123 1381 681">
<defs>
<linearGradient id="mside" gradientUnits="userSpaceOnUse" x1="245.7" x2="626.7" y1="0" y2="0">
<stop offset="0" stop-color="#b0683b"/><stop offset=".05" stop-color="#c77640"/><stop offset=".16" stop-color="#d67e42"/><stop offset=".38" stop-color="#d07a3f"/><stop offset=".55" stop-color="#c0703c"/><stop offset=".72" stop-color="#9d5f3a"/><stop offset=".86" stop-color="#7c5237"/><stop offset="1" stop-color="#84563a"/></linearGradient>
<linearGradient id="mtop" gradientUnits="userSpaceOnUse" x1="245.7" x2="626.7" y1="0" y2="0">
<stop offset="0" stop-color="#8c5533"/><stop offset=".25" stop-color="#9c5d36"/><stop offset=".5" stop-color="#b06739"/><stop offset=".75" stop-color="#bd6d3a"/><stop offset="1" stop-color="#c27039"/></linearGradient>
<linearGradient id="mmid" gradientUnits="userSpaceOnUse" x1="245.7" x2="626.7" y1="0" y2="0">
<stop offset="0" stop-color="#a9633a"/><stop offset=".5" stop-color="#b1683a"/><stop offset="1" stop-color="#b96d3c"/></linearGradient>
<linearGradient id="mlens" gradientUnits="userSpaceOnUse" x1="245.7" x2="626.7" y1="0" y2="0">
<stop offset="0" stop-color="#c86016"/><stop offset=".3" stop-color="#c45b13"/><stop offset=".6" stop-color="#b8540f"/><stop offset=".8" stop-color="#8f420f"/><stop offset="1" stop-color="#783a14"/></linearGradient>
<linearGradient id="mrod" gradientUnits="userSpaceOnUse" x1="398" x2="474" y1="0" y2="0">
<stop offset="0" stop-color="#a84e12"/><stop offset=".25" stop-color="#b95716"/><stop offset=".55" stop-color="#b55314"/><stop offset=".85" stop-color="#9a460f"/><stop offset="1" stop-color="#8e400e"/></linearGradient>
<linearGradient id="mrod2" gradientUnits="userSpaceOnUse" x1="398" x2="474" y1="0" y2="0">
<stop offset="0" stop-color="#c25a14"/><stop offset=".35" stop-color="#d46418"/><stop offset=".7" stop-color="#c05812"/><stop offset="1" stop-color="#9c480f"/></linearGradient>
<linearGradient id="mhole" gradientUnits="userSpaceOnUse" x1="398" x2="474" y1="0" y2="0">
<stop offset="0" stop-color="#76533a"/><stop offset=".3" stop-color="#a8663a"/><stop offset=".6" stop-color="#db7c3e"/><stop offset="1" stop-color="#e3813f"/></linearGradient>
<linearGradient id="mring" gradientUnits="userSpaceOnUse" x1="305" x2="567" y1="0" y2="0">
<stop offset="0" stop-color="#c95e16"/><stop offset=".12" stop-color="#bd5610"/><stop offset=".45" stop-color="#c75c14"/><stop offset=".75" stop-color="#a84c0e"/><stop offset=".92" stop-color="#7e3a0e"/><stop offset="1" stop-color="#8a4312"/></linearGradient>
<linearGradient id="mbowl" gradientUnits="userSpaceOnUse" x1="305" x2="567" y1="0" y2="0">
<stop offset="0" stop-color="#d9742e"/><stop offset=".1" stop-color="#d2661c"/><stop offset=".4" stop-color="#cc6018"/><stop offset=".65" stop-color="#b85614"/><stop offset=".85" stop-color="#6e3512"/><stop offset="1" stop-color="#7a4a2c"/></linearGradient>
<linearGradient id="mfloor" gradientUnits="userSpaceOnUse" x1="320" x2="552" y1="0" y2="0">
<stop offset="0" stop-color="#cf6218"/><stop offset=".5" stop-color="#c7601c"/><stop offset=".8" stop-color="#b75a1c"/><stop offset="1" stop-color="#a04c12"/></linearGradient>
<linearGradient id="msmall" gradientUnits="userSpaceOnUse" x1="371" x2="501" y1="0" y2="0">
<stop offset="0" stop-color="#b85c20"/><stop offset=".15" stop-color="#c45e18"/><stop offset=".5" stop-color="#b45412"/><stop offset=".8" stop-color="#84400f"/><stop offset="1" stop-color="#76401e"/></linearGradient>
<linearGradient id="mcup" gradientUnits="userSpaceOnUse" x1="305" x2="567" y1="0" y2="0">
<stop offset="0" stop-color="#d27a3c"/><stop offset=".06" stop-color="#da8040"/><stop offset=".3" stop-color="#d4722c"/><stop offset=".6" stop-color="#bd5c18"/><stop offset=".88" stop-color="#74391a"/><stop offset="1" stop-color="#80492a"/></linearGradient>
<linearGradient id="mwall" gradientUnits="userSpaceOnUse" x1="320" x2="552" y1="0" y2="0">
<stop offset="0" stop-color="#b64f0d"/><stop offset=".3" stop-color="#bd5510"/><stop offset=".6" stop-color="#b9530f"/><stop offset="1" stop-color="#9c460d"/></linearGradient>
<linearGradient id="mnose" gradientUnits="userSpaceOnUse" x1="384" x2="488" y1="0" y2="0">
<stop offset="0" stop-color="#aa4e12"/><stop offset=".3" stop-color="#b8540f"/><stop offset=".7" stop-color="#c45c14"/><stop offset="1" stop-color="#c8601a"/></linearGradient>
<linearGradient id="mrodb" gradientUnits="userSpaceOnUse" x1="398" x2="474" y1="0" y2="0">
<stop offset="0" stop-color="#d8681c"/><stop offset=".3" stop-color="#e07224"/><stop offset=".7" stop-color="#cf661e"/><stop offset="1" stop-color="#b85a1a"/></linearGradient>
<linearGradient id="mu2" gradientUnits="userSpaceOnUse" x1="245.7" x2="626.7" y1="0" y2="0">
<stop offset="0" stop-color="#ff9a50" stop-opacity=".16"/><stop offset=".45" stop-color="#ff9a50" stop-opacity=".08"/><stop offset=".6" stop-color="#402010" stop-opacity=".04"/><stop offset="1" stop-color="#402010" stop-opacity=".14"/></linearGradient>
<clipPath id="cU2"><ellipse cx="436.2" cy="505.3" rx="190.5" ry="108.2"/></clipPath>
<clipPath id="cL1"><ellipse cx="436.2" cy="584.0" rx="190.5" ry="112.0"/></clipPath>
<clipPath id="cL2"><ellipse cx="436.2" cy="654.0" rx="190.5" ry="112.3"/></clipPath>
<clipPath id="cUsil"><path d="M245.7 317.25 A190.5 110.15 0 0 1 626.7 317.25 V505.3 A190.5 108.2 0 0 1 245.7 505.3 Z"/></clipPath>

</defs>
<path d="M245.7 584.0 A190.5 112.0 0 0 1 626.7 584.0 V654.0 A190.5 112.3 0 0 1 245.7 654.0 Z" fill="url(#mside)"/>
<g fill="url(#mtop)"><ellipse cx="436.2" cy="584.0" rx="190.5" ry="112.0"/></g>
<g clip-path="url(#cL1)"><g fill="url(#mmid)"><ellipse cx="436.2" cy="654.0" rx="190.5" ry="112.3"/></g></g>
<path d="M245.7 317.25 A190.5 110.15 0 0 1 626.7 317.25 V505.3 A190.5 108.2 0 0 1 245.7 505.3 Z" fill="url(#mside)"/>
<g fill="url(#mu2)"><ellipse cx="436.2" cy="505.3" rx="190.5" ry="108.2"/></g>
<g clip-path="url(#cL1)"><g fill="url(#mlens)"><ellipse cx="436.2" cy="505.3" rx="190.5" ry="108.2"/></g></g>
<g fill="url(#mtop)"><ellipse cx="436.2" cy="317.25" rx="190.5" ry="110.15"/></g>
<g id="inner">
<!-- cup outer silhouette -->
<path d="M305.5 538 A130.5 75.4 0 0 1 566.5 538 V584 A130.5 75.4 0 0 1 305.5 584 Z" fill="url(#mcup)"/>
<!-- cone + small hole silhouette -->
<path d="M319.9 550 V584 A116.3 67.2 0 0 0 346 626.5 L385.8 654 V657 A58.8 34 0 0 0 495 657 L486.2 654 L526 626.5 A116.3 67.2 0 0 0 552.5 584 V550 Z" fill="url(#mbowl)"/>
<path d="M371.2 630 V657 A64.8 37.5 0 0 0 500.8 657 V630 Z" fill="url(#msmall)"/>
<!-- rim + interior -->
<ellipse cx="436" cy="538" rx="130.5" ry="75.4" fill="url(#mring)"/>
<ellipse cx="436" cy="538" rx="116.3" ry="67.2" fill="url(#mwall)"/>
<clipPath id="cEi"><ellipse cx="436" cy="538" rx="116.3" ry="67.2"/></clipPath>
<g clip-path="url(#cEi)">
<ellipse cx="436" cy="584" rx="116.3" ry="67.2" fill="url(#mfloor)"/>
</g>
<!-- cone interior seen from above: between E_i@584 and hole@630 -->
<clipPath id="cEf"><ellipse cx="436" cy="584" rx="116.3" ry="67.2"/></clipPath>
<g clip-path="url(#cEf)"><ellipse cx="436" cy="630" rx="64.8" ry="37.5" fill="#c75e18" fill-opacity=".55"/></g>
<ellipse cx="436" cy="640" rx="58.8" ry="34" fill="#d4681e" fill-opacity=".75"/>
<path d="M436 620 V656 M432.5 627.5 H439.5 M436 620 L433.5 625" stroke="#c9541a" stroke-width="1" fill="none" stroke-opacity=".8"/><path d="M436 656 L410 670 M410 670 l1 -6 M410 670 l6 -1" stroke="#b5532c" stroke-width="1" fill="none" stroke-opacity=".75"/><path d="M436 656 L459 670 M459 670 l1 -6 M459 670 l-6 -1" stroke="#a8701a" stroke-width="1" fill="none" stroke-opacity=".75"/>
</g>
<!-- darkening of part seen through upper cylinder wall -->
<g clip-path="url(#cUsil)"><path d="M305.5 538 A130.5 75.4 0 0 1 566.5 538 V584 A130.5 75.4 0 0 1 305.5 584 Z" fill="#a84808" fill-opacity=".16"/></g>
<!-- nose hole in bottom face around bore -->
<ellipse cx="436" cy="507" rx="52.3" ry="30.2" fill="url(#mnose)"/>
<!-- bore -->
<path d="M398.7 317.6 V522 A37.5 21.7 0 0 0 473.7 522 V317.6 A37.5 21.7 0 0 1 398.7 317.6 Z" fill="url(#mrod2)"/>
<clipPath id="cU1"><ellipse cx="436.2" cy="317.25" rx="190.5" ry="110.15"/></clipPath>
<g clip-path="url(#cU1)"><path d="M398.7 317.6 V440 H473.7 V317.6 A37.5 21.7 0 0 1 398.7 317.6 Z" fill="url(#mrod)"/></g>
<clipPath id="cHole"><path d="M383 507 A52.3 30.2 0 0 1 489 507 V560 H383 Z"/></clipPath>
<g clip-path="url(#cHole)"><path d="M398.7 470 V522 A37.5 21.7 0 0 0 473.7 522 V470 Z" fill="url(#mrod2)"/>
<ellipse cx="436" cy="524" rx="37.5" ry="21.7" fill="url(#mrodb)"/></g>
<path d="M399.5 528 A37.5 21.7 0 0 0 472.9 528 L473.7 522 A37.5 21.7 0 0 1 398.7 522 Z" fill="#b0561c"/>
<!-- top opening of bore -->
<ellipse cx="436.2" cy="317.6" rx="37.5" ry="21.8" fill="url(#mhole)"/>
<g fill="none" stroke="#f26c12" stroke-width="1">
<ellipse cx="436.2" cy="317.6" rx="37.5" ry="21.8"/>
<path d="M398.7 317.6 V522 M473.7 317.6 V522" stroke="#8a3d0c" stroke-opacity=".55"/>
<ellipse cx="436" cy="507" rx="52.3" ry="30.2" stroke-opacity=".8"/>
<path d="M398.7 522 A37.5 21.7 0 0 0 473.7 522" stroke-opacity=".8"/>
<path d="M398.7 524 A37.5 21.7 0 0 1 473.7 524" stroke-opacity=".6"/>
<ellipse cx="436" cy="538" rx="130.5" ry="75.4" stroke-opacity=".5"/>
<ellipse cx="436" cy="538" rx="116.3" ry="67.2" stroke-opacity=".5"/>
<path d="M305.5 584 A130.5 75.4 0 0 0 566.5 584" stroke-opacity=".45"/>
<path d="M319.9 584 A116.3 67.2 0 0 0 552.5 584" stroke-opacity=".4"/>
<path d="M319.9 584 A116.3 67.2 0 0 1 552.5 584" stroke-opacity=".25"/>
<ellipse cx="436" cy="630" rx="64.8" ry="37.5" stroke-opacity=".6"/>
<ellipse cx="436" cy="634" rx="58.8" ry="34" stroke-opacity=".45"/>
<path d="M371.2 657 A64.8 37.5 0 0 0 500.8 657" stroke-opacity=".45" stroke="#d98a55"/>
<path d="M377.2 657 A58.8 34 0 0 0 494.8 657" stroke-opacity=".55"/>
<path d="M377.2 644 A58.8 34 0 0 0 494.8 644" stroke-opacity=".4"/>
<path d="M305.5 538 V584 M566.5 538 V584 M319.9 538 V584 M552.5 538 V584" stroke="#a04a10" stroke-opacity=".35"/>
<path d="M371.2 630 V657 M500.8 630 V657" stroke="#a04a10" stroke-opacity=".3"/>
</g>

<g fill="none" stroke="#f26c12" stroke-width="1">
<ellipse cx="436.2" cy="317.25" rx="190.5" ry="110.15"/>
<ellipse cx="436.2" cy="505.3" rx="190.5" ry="108.2"/>
<path d="M245.7 584.0 A190.5 112.0 0 0 1 626.7 584.0" stroke-opacity=".35"/><path d="M245.7 584.0 A190.5 112.0 0 0 0 626.7 584.0"/>
<path d="M245.7 654.0 A190.5 112.3 0 0 1 626.7 654.0" stroke-opacity=".35"/><path d="M245.7 654.0 A190.5 112.3 0 0 0 626.7 654.0"/>
<path d="M245.7 317.25 V505.3 M626.7 317.25 V505.3 M245.7 584.0 V654.0 M626.7 584.0 V654.0" stroke-opacity=".3"/>
</g>
</svg>
</div>
<div id="band" class="abs"></div><div id="bandline" class="abs"></div>
<div id="bottom" class="abs">
<div class="abs" style="left:0;top:-831px;width:0;height:0">
<div class="hsep" style="left:20px;top:863px;height:19px;background:#b5b5b5"></div>
<div class="hsep" style="left:349px;top:863px;height:19px;background:#b5b5b5"></div>
<div class="hsep" style="left:507px;top:863px;height:19px;background:#b5b5b5"></div>
<div class="t" style="left:24px;top:864px;color:#3c3c3c">表达式</div>
<div class="t" style="left:353px;top:864px;color:#3c3c3c">值</div>
<div class="t" style="left:511px;top:864px;color:#3c3c3c">描述</div>
<div class="abs" style="left:-2px;top:885px;width:708px;height:21px;border:1px dotted #000"></div>
<div class="abs" style="left:710px;top:883px;width:680px;height:22px;border:1px dotted #000;background:#e4e4e4"></div>
<svg class="abs" style="left:688px;top:841px" width="9" height="12" viewBox="0 0 9 12"><path d="M2 0.5 H7 M2.5 0.5 V7.5 M0.5 7.5 H8.5 M4.5 7.5 V11.5" stroke="#222" stroke-width="1" fill="none"/><rect x="5" y="0.5" width="2" height="7" fill="#222"/></svg>
</div>

</div>
<div id="dlg" class="abs">
<div class="abs" style="left:-701px;top:-169px;width:0;height:0">
<!-- title -->
<svg class="abs" style="left:709px;top:175px" width="16" height="16" viewBox="0 0 16 16">
<rect x="0.5" y="0.5" width="12" height="12" fill="#eef1f5" stroke="#b7bcc4"/><rect x="0" y="0" width="13" height="2.2" fill="#3f86dc"/>
<rect x="3.5" y="3.5" width="12" height="12" fill="#eef1f5" stroke="#b7bcc4"/><rect x="3" y="3" width="13" height="2.2" fill="#3f86dc"/>
<rect x="9" y="6.4" width="5.4" height="1.3" fill="#4a8ee0"/><rect x="4.6" y="9.2" width="5" height="1.5" fill="#7ca6dc"/><rect x="4.6" y="12" width="7.4" height="1.2" fill="#3b7fd6"/>
</svg>
<div class="t" style="left:730px;top:176px">电子光学快速建模</div>
<svg class="abs" style="left:1316px;top:177px" width="12" height="12" viewBox="0 0 12 12"><path d="M1 1 L11 11 M11 1 L1 11" stroke="#111" stroke-width="1.1" fill="none"/></svg>
<!-- row 1 -->
<div class="abs" style="left:711px;top:214px;width:46px;height:16px;overflow:hidden"><div class="t" style="left:-4px;top:0">集合名称</div></div>
<div class="abs" style="left:761px;top:211px;width:120px;height:22px;border:1px solid #dadada;background:#fff"></div>
<div class="t" style="left:764px;top:212px;color:#6d6d6d">电子光学</div>
<div class="t" style="left:919px;top:214px">模板</div>
<div class="combo" style="left:949px;top:214px;width:183px"></div>
<div class="t" style="left:952px;top:217px;color:#6d6d6d">轴对称皮尔斯电子枪</div>
<svg class="abs" style="left:1121px;top:222px" width="8" height="5" viewBox="0 0 8 5"><path d="M0.5 0.5 H7.5 L4 4.5 Z" fill="#b4b4b4"/></svg>
<div class="btn dis" style="left:1169px;top:210px">导入模型..</div>
<div class="btn" style="left:1252px;top:210px">导出模型..</div>
<!-- group 1 -->
<div class="grp" style="left:712px;top:247px;width:260px;height:268px"></div>
<div class="t" style="left:718px;top:240px;background:#fff;padding:0 2px">零件列表</div>
<div class="list" style="left:716px;top:259px;width:251px;height:254px"></div>
<div class="hsep" style="left:735px;top:263px;height:19px"></div>
<div class="hsep" style="left:873px;top:263px;height:19px"></div>
<div class="t" style="left:739px;top:263px;color:#4a4a4a">名称</div>
<div class="t" style="left:877px;top:263px;color:#4a4a4a">材料</div>
<div class="sel" style="left:717px;top:284px;width:249px;height:22px"></div>
<div class="rowline" style="left:717px;top:328px;width:249px"></div>
<div class="rowline" style="left:717px;top:350px;width:249px"></div>
<svg class="abs" style="left:717px;top:288px" width="18" height="60" viewBox="0 0 18 60"><g fill="#f7a325" stroke="#b8935a" stroke-width="0.9"><path transform="translate(0 0)" d="M1.3 2 L16.8 1.2 C12.8 4.2 10 8.6 8.6 13.6 L7 15 L2.4 15 L1.3 13.8 Z"/><path transform="translate(0 22)" d="M1.3 2 L16.8 1.2 C12.8 4.2 10 8.6 8.6 13.6 L7 15 L2.4 15 L1.3 13.8 Z"/><path transform="translate(0 44)" d="M1.3 2 L16.8 1.2 C12.8 4.2 10 8.6 8.6 13.6 L7 15 L2.4 15 L1.3 13.8 Z"/></g></svg>
<div class="t r" style="left:737px;top:287px">通用零件1</div><div class="t r" style="left:875px;top:287px">Vacuum</div>
<div class="t r" style="left:737px;top:309px">通用零件2</div><div class="t r" style="left:875px;top:309px">Vacuum</div>
<div class="t r" style="left:737px;top:331px">通用零件3</div><div class="t r" style="left:875px;top:331px">Vacuum</div>
<!-- group 2 -->
<div class="grp" style="left:976px;top:247px;width:351px;height:268px"></div>
<div class="t" style="left:983px;top:240px;background:#fff;padding:0 2px">零件结构</div>
<div class="list" style="left:980px;top:259px;width:344px;height:254px"></div>
<div class="hsep" style="left:1005px;top:263px;height:19px"></div>
<div class="hsep" style="left:1111px;top:263px;height:19px"></div>
<div class="hsep" style="left:1217px;top:263px;height:19px"></div>
<div class="t" style="left:985px;top:263px;color:#4a4a4a">编...</div>
<div class="t" style="left:1009px;top:263px;color:#4a4a4a">曲率半径(r)</div>
<div class="t" style="left:1115px;top:263px;color:#4a4a4a">Z 坐标</div>
<div class="t" style="left:1221px;top:263px;color:#4a4a4a">R 坐标</div>
<div class="sel" style="left:981px;top:284px;width:342px;height:22px"></div>
<div class="rowline" style="left:981px;top:328px;width:342px"></div>
<div class="rowline" style="left:981px;top:350px;width:342px"></div>
<div class="rowline" style="left:981px;top:372px;width:342px"></div>
<div class="t r" style="left:984px;top:287px">1</div><div class="t r" style="left:1007px;top:287px">0</div><div class="t r" style="left:1114px;top:287px">1</div><div class="t r" style="left:1219px;top:287px">0</div>
<div class="t r" style="left:984px;top:309px">2</div><div class="t r" style="left:1007px;top:309px">9.3</div><div class="t r" style="left:1114px;top:309px">1.51</div><div class="t r" style="left:1219px;top:309px">3.05</div>
<div class="t r" style="left:984px;top:331px">3</div><div class="t r" style="left:1007px;top:331px">0</div><div class="t r" style="left:1114px;top:331px">0</div><div class="t r" style="left:1219px;top:331px">3.05</div>
<div class="t r" style="left:984px;top:353px">4</div><div class="t r" style="left:1007px;top:353px">0</div><div class="t r" style="left:1114px;top:353px">0</div><div class="t r" style="left:1219px;top:353px">0</div>
<!-- group 3 -->
<div class="grp" style="left:712px;top:525px;width:537px;height:364px"></div>
<div class="t" style="left:719px;top:518px;background:#fff;padding:0 2px">二维预览</div>
<div class="t" style="left:733px;top:538px">显示类型</div>
<div class="combo" style="left:787px;top:537px;width:147px"></div>
<div class="t" style="left:791px;top:540px">预览所有零件</div>
<svg class="abs" style="left:923px;top:545px" width="8" height="5" viewBox="0 0 8 5"><path d="M0.5 0.5 H7.5 L4 4.5 Z" fill="#5a5a5a"/></svg>
<div class="t" style="left:1011px;top:538px">旋转轴</div>
<div class="combo" style="left:1052px;top:537px;width:44px;border-color:#c8c8c8"></div>
<div class="t" style="left:1056px;top:540px;color:#7a7a7a">Z</div>
<svg class="abs" style="left:1085px;top:545px" width="8" height="5" viewBox="0 0 8 5"><path d="M0.5 0.5 H7.5 L4 4.5 Z" fill="#b8b8b8"/></svg>
<div class="t" style="left:1164px;top:539px">保持纵横比</div>
<div class="abs" style="left:1227px;top:540px;width:13px;height:13px;border:1px solid #bcbcbc;background:#fff"></div>
<svg class="abs" style="left:1227px;top:540px" width="13" height="13" viewBox="0 0 13 13"><path d="M3 6.5 L5.5 9.2 L10 3.5" stroke="#8a8a8a" stroke-width="1.4" fill="none"/></svg>
<svg class="abs" style="left:725px;top:555px" width="520" height="330" viewBox="725 555 520 330">
<defs><pattern id="hatch" width="6" height="6" patternUnits="userSpaceOnUse" patternTransform="rotate(45)"><rect width="6" height="6" fill="#f4f6f7"/><path d="M0 0H6M0 0V6" stroke="#a9b7bd" stroke-width="1"/></pattern></defs>
<rect x="736.5" y="561.5" width="497" height="305" fill="#fff" stroke="#000" stroke-width="1"/>
<path d="M736 638 H839 V710 H909 V727 H839 L776 789 H736 Z" fill="#a3b4ba" stroke="#000" stroke-width="2" stroke-linejoin="miter"/>
<path d="M953 638 H1233 V822 H928 L953 806 Z" fill="#a3b4ba" stroke="#000" stroke-width="2" stroke-linejoin="miter"/>
<path d="M736 797.5 H770 Q758.5 835 758 866 H736 Z" fill="url(#hatch)" stroke="#000" stroke-width="2"/>
<g fill="#ee1111"><circle cx="736" cy="797.5" r="2.6"/><circle cx="770" cy="797.5" r="2.6"/><circle cx="758" cy="866" r="2.6"/><circle cx="736" cy="866" r="2.6"/></g>
<g font-family="Liberation Sans, sans-serif" font-size="12" fill="#2a1a0a">
<text x="738.5" y="812">3</text><text x="772.5" y="812">2</text><text x="738.5" y="860">4</text><text x="760.5" y="860">1</text>
<text x="980" y="879">Z</text>

</g>
</svg>
<div class="abs" style="left:720px;top:704px;width:16px;height:16px;line-height:16px;text-align:center;transform:rotate(-90deg);color:#2a1a0a;font-family:'Liberation Sans',sans-serif;font-size:12px">R</div>

<svg class="abs" style="left:1319px;top:883px" width="18" height="18" viewBox="0 0 18 18"><rect width="18" height="18" fill="#f0f0f0"/><g fill="#b8b8b8"><rect x="12.4" y="7.6" width="2" height="2"/><rect x="9.2" y="10.8" width="2" height="2"/><rect x="12.4" y="10.8" width="2" height="2"/><rect x="6" y="14" width="2" height="2"/><rect x="9.2" y="14" width="2" height="2"/><rect x="12.4" y="14" width="2" height="2"/></g></svg>
<div class="btn dis" style="left:1252px;top:769px">帮助</div>
<div class="btn hot" style="left:1252px;top:802px">撤销结果</div>
<div class="btn" style="left:1252px;top:834px">确定</div>
<div class="btn" style="left:1252px;top:867px">取消</div>

</div>

</div>
</body>
</html>
